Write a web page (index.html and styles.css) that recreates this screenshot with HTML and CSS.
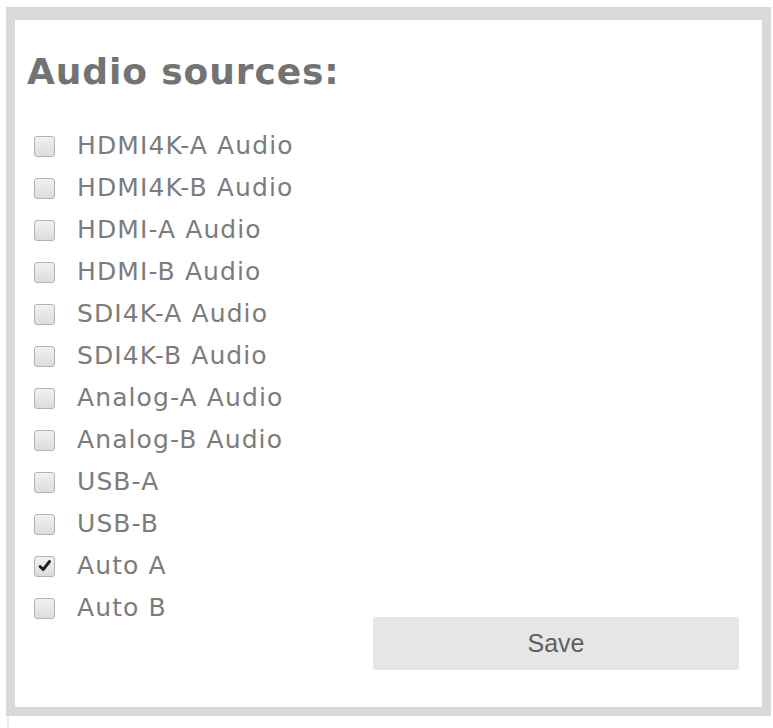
FILE: index.html
```html
<!DOCTYPE html>
<html lang="en">
<head>
<meta charset="utf-8">
<title>Audio sources</title>
<link rel="stylesheet" href="styles.css">
</head>
<body>
<div class="frame">
  <h2 class="title">Audio sources:</h2>
  <ul class="sources">
    <li class="row"><span class="box"></span><span class="label">HDMI4K-A Audio</span></li>
    <li class="row"><span class="box"></span><span class="label">HDMI4K-B Audio</span></li>
    <li class="row"><span class="box"></span><span class="label">HDMI-A Audio</span></li>
    <li class="row"><span class="box"></span><span class="label">HDMI-B Audio</span></li>
    <li class="row"><span class="box"></span><span class="label">SDI4K-A Audio</span></li>
    <li class="row"><span class="box"></span><span class="label">SDI4K-B Audio</span></li>
    <li class="row"><span class="box"></span><span class="label">Analog-A Audio</span></li>
    <li class="row"><span class="box"></span><span class="label">Analog-B Audio</span></li>
    <li class="row"><span class="box"></span><span class="label">USB-A</span></li>
    <li class="row"><span class="box"></span><span class="label">USB-B</span></li>
    <li class="row"><span class="box checked"><svg viewBox="0 0 20 20" width="18" height="18"><path d="M4.5 10.5 L8 14 L15 5" fill="none" stroke="#1e1e1e" stroke-width="3.2" stroke-linecap="round" stroke-linejoin="round"/></svg></span><span class="label">Auto A</span></li>
    <li class="row"><span class="box"></span><span class="label">Auto B</span></li>
  </ul>
  <div class="actions">
    <button class="save" type="button">Save</button>
  </div>
</div>
<div class="below"></div>
</body>
</html>
```

FILE: styles.css
```css
html, body {
  margin: 0;
  padding: 0;
  background: #ffffff;
}

body {
  padding: 7px 2px 0 6px;
  font-family: "DejaVu Sans", Verdana, sans-serif;
}

.frame {
  border: 9px solid #d9d9d9;
  border-top-width: 13px;
  background: #ffffff;
  padding: 31px 23px 37px 19px;
}

.title {
  margin: 0 0 32px -7px;
  font-size: 36px;
  line-height: 42px;
  font-weight: bold;
  color: #737373;
  letter-spacing: 0.9px;
}

.sources {
  list-style: none;
  margin: 0;
  padding: 0;
}

.row {
  display: flex;
  align-items: center;
  height: 42px;
  gap: 22px;
}

.box {
  box-sizing: border-box;
  width: 21px;
  height: 21px;
  border: 1px solid #b3b3b3;
  border-radius: 3px;
  background: linear-gradient(#f1f1f1, #dcdcdc);
  display: flex;
  align-items: center;
  justify-content: center;
  flex: none;
}

.box svg {
  display: block;
}

.label {
  font-size: 25px;
  line-height: 42px;
  color: #7c7c7c;
  letter-spacing: 1.1px;
}

.actions {
  display: flex;
  justify-content: flex-end;
  margin-top: -12px;
}

.save {
  width: 366px;
  height: 53px;
  border: none;
  border-radius: 3px;
  background: #e6e6e6;
  color: #5f5f5f;
  font-family: "Liberation Sans", Arial, sans-serif;
  font-size: 25px;
  padding: 0;
}

.below {
  margin-left: 1px;
  height: 11px;
  border-left: 2px solid #ececec;
}
```
